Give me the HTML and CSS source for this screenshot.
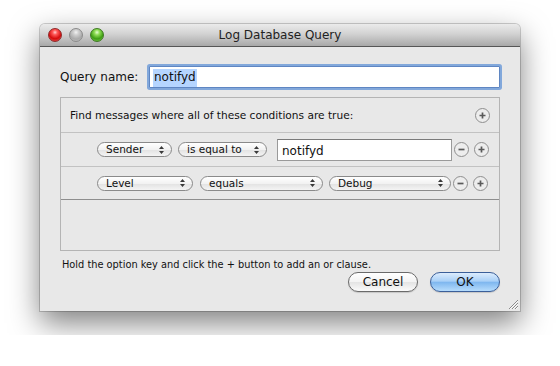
FILE: index.html
```html
<!DOCTYPE html>
<html lang="en">
<head>
  <meta charset="UTF-8">
  <title>Log Database Query</title>
  <link rel="stylesheet" href="styles.css">
</head>
<body>
  <div class="window">
    <!-- Title bar -->
    <div class="titlebar">
      <div class="lights">
        <span class="light red"></span>
        <span class="light gray"></span>
        <span class="light green"></span>
      </div>
      <div class="title">Log Database Query</div>
      <div></div>
    </div>

    <div class="content">
      <div class="query-row">
        <label class="query-label">Query name:</label>
        <div class="query-field"><span class="selected">notifyd</span></div>
      </div>

      <!-- Predicate editor -->
      <div class="predicates">
        <div class="pred-header">
          <span>Find messages where all of these conditions are true:</span>
          <svg class="round-btn" width="15" height="15" viewBox="0 0 15 15"><circle cx="7.5" cy="7.5" r="7" class="rb-circle"/><path d="M4.5 7.5h6M7.5 4.5v6" class="rb-glyph"/></svg>
        </div>

        <div class="pred-row">
          <div class="popup w-sender"><span>Sender</span><svg width="5" height="8" viewBox="0 0 5 8"><path d="M0 3L2.5 0L5 3ZM0 5L2.5 8L5 5Z" fill="#3a3a3a"/></svg></div>
          <div class="popup w-isequal gap-6"><span>is equal to</span><svg width="5" height="8" viewBox="0 0 5 8"><path d="M0 3L2.5 0L5 3ZM0 5L2.5 8L5 5Z" fill="#3a3a3a"/></svg></div>
          <div class="text-field gap-10">notifyd</div>
          <svg class="round-btn gap-2" width="15" height="15" viewBox="0 0 15 15"><circle cx="7.5" cy="7.5" r="7" class="rb-circle"/><path d="M4.5 7.5h6" class="rb-glyph"/></svg>
          <svg class="round-btn gap-5" width="15" height="15" viewBox="0 0 15 15"><circle cx="7.5" cy="7.5" r="7" class="rb-circle"/><path d="M4.5 7.5h6M7.5 4.5v6" class="rb-glyph"/></svg>
        </div>

        <div class="pred-row last">
          <div class="popup w-level"><span>Level</span><svg width="5" height="8" viewBox="0 0 5 8"><path d="M0 3L2.5 0L5 3ZM0 5L2.5 8L5 5Z" fill="#3a3a3a"/></svg></div>
          <div class="popup w-equals gap-7"><span>equals</span><svg width="5" height="8" viewBox="0 0 5 8"><path d="M0 3L2.5 0L5 3ZM0 5L2.5 8L5 5Z" fill="#3a3a3a"/></svg></div>
          <div class="popup w-debug gap-6"><span>Debug</span><svg width="5" height="8" viewBox="0 0 5 8"><path d="M0 3L2.5 0L5 3ZM0 5L2.5 8L5 5Z" fill="#3a3a3a"/></svg></div>
          <svg class="round-btn gap-2" width="15" height="15" viewBox="0 0 15 15"><circle cx="7.5" cy="7.5" r="7" class="rb-circle"/><path d="M4.5 7.5h6" class="rb-glyph"/></svg>
          <svg class="round-btn gap-5" width="15" height="15" viewBox="0 0 15 15"><circle cx="7.5" cy="7.5" r="7" class="rb-circle"/><path d="M4.5 7.5h6M7.5 4.5v6" class="rb-glyph"/></svg>
        </div>

        <div class="pred-empty"></div>
      </div>

      <div class="hint">Hold the option key and click the + button to add an or clause.</div>

      <div class="buttons">
        <button class="push-btn">Cancel</button>
        <button class="push-btn default">OK</button>
      </div>
    </div>

    <!-- Resize grip -->
    <svg class="grip" width="11" height="11" viewBox="0 0 11 11">
      <path d="M1 10L10 1M4 10L10 4M7 10L10 7" stroke="#8a8a8a" stroke-width="1"/>
      <path d="M2 10L10 2M5 10L10 5M8 10L10 8" stroke="#fafafa" stroke-width="1"/>
    </svg>
  </div>
</body>
</html>
```

FILE: styles.css
```css
body {
  margin: 0;
  padding: 24px 40px;
  background-color: #ffffff;
  font-family: 'DejaVu Sans', 'Liberation Sans', sans-serif;
  color: #111;
}

  .window {
    position: relative;
    width: 480px;
    height: 287px;
    box-sizing: border-box;
    background-color: #e8e8e8;
    border-radius: 5px 5px 0 0;
    box-shadow: 0 12px 30px rgba(0, 0, 0, 0.5), 0 0 0 1px rgba(0, 0, 0, 0.18);
  }

  .titlebar {
    display: grid;
    grid-template-columns: 1fr auto 1fr;
    align-items: center;
    height: 22px;
    border-bottom: 1px solid #565656;
    border-radius: 5px 5px 0 0;
    background: linear-gradient(#ebebeb, #d2d2d2 45%, #a8a8a8);
  }

  .lights {
    display: flex;
    gap: 7px;
    padding-left: 8px;
  }

  .light {
    width: 14px;
    height: 14px;
    box-sizing: border-box;
    border-radius: 50%;
  }

  .light.red {
    background: radial-gradient(circle at 50% 28%, #ffd0d0 0, #ff5a5a 22%, #d50c0c 60%, #e85a5a 100%);
    border: 1px solid #8e2a2a;
  }

  .light.gray {
    background: radial-gradient(circle at 50% 28%, #f2f2f2 0, #cfcfcf 25%, #a9a9a9 65%, #cdcdcd 100%);
    border: 1px solid #8a8a8a;
  }

  .light.green {
    background: radial-gradient(circle at 50% 28%, #e6ffd0 0, #8fdc55 25%, #3d9e12 62%, #8ad45e 100%);
    border: 1px solid #3e7a22;
  }

  .title {
    font-size: 12px;
    color: #222;
  }

  .content {
    padding: 19px 20px 0 20px;
  }

  .query-row {
    display: flex;
    align-items: center;
  }

  .query-label {
    width: 89px;
    font-size: 12px;
  }

  .query-field {
    flex: 1;
    height: 22px;
    box-sizing: border-box;
    padding: 3px 0 0 3px;
    background: #ffffff;
    border: 1px solid #5f86c2;
    box-shadow: 0 0 0 2px rgba(112, 156, 216, 0.85);
    border-radius: 1px;
    font-size: 12px;
  }

  .selected {
    background-color: #b5d5ff;
    padding: 1px 1px 3px 1px;
  }

  .predicates {
    margin-top: 9px;
    border: 1px solid #b4b4b4;
  }

  .pred-header {
    display: flex;
    justify-content: space-between;
    align-items: center;
    height: 34px;
    padding: 0 9px 0 9px;
    font-size: 10.6px;
    border-bottom: 1px solid #c2c2c2;
  }

  .pred-row {
    display: flex;
    align-items: center;
    height: 33px;
    padding-left: 36px;
    border-bottom: 1px solid #c2c2c2;
  }

  .pred-row.last {
    height: 32px;
    border-bottom: 1px solid #8e8e8e;
  }

  .pred-empty {
    height: 50px;
  }

  .popup {
    display: flex;
    justify-content: space-between;
    align-items: center;
    height: 15px;
    box-sizing: border-box;
    padding: 0 7px 0 8px;
    border: 1px solid #8a8a8a;
    border-radius: 8px;
    background: linear-gradient(#ffffff, #f2f2f2 50%, #e2e2e2 52%, #f4f4f4);
    font-size: 10.5px;
    line-height: 13px;
  }

  .w-sender { width: 75px; }
  .w-isequal { width: 89px; }
  .w-level { width: 96px; }
  .w-equals { width: 123px; }
  .w-debug { width: 122px; }

  .gap-2 { margin-left: 2px; }
  .gap-5 { margin-left: 5px; }
  .gap-6 { margin-left: 6px; }
  .gap-7 { margin-left: 7px; }
  .gap-10 { margin-left: 10px; }

  .text-field {
    width: 175px;
    height: 22px;
    box-sizing: border-box;
    padding: 4px 0 0 4px;
    background: #ffffff;
    border: 1px solid #9a9a9a;
    border-top-color: #7a7a7a;
    font-size: 12px;
  }

  .rb-circle {
    fill: #ededed;
    stroke: #8e8e8e;
    stroke-width: 1;
  }

  .rb-glyph {
    stroke: #5a5a5a;
    stroke-width: 1.7;
  }

  .round-btn {
    display: block;
    flex: none;
  }

  .hint {
    margin-top: 7px;
    padding-left: 2px;
    font-size: 9.8px;
    line-height: 13px;
  }

  .buttons {
    display: flex;
    justify-content: flex-end;
    gap: 12px;
    margin-top: 1px;
  }

  .push-btn {
    width: 70px;
    height: 20px;
    padding: 0;
    border: 1px solid #6a6a6a;
    border-radius: 10px;
    background: linear-gradient(#ffffff, #f3f3f3 50%, #e4e4e4 52%, #fbfbfb);
    font-family: 'DejaVu Sans', 'Liberation Sans', sans-serif;
    font-size: 12px;
    color: #111;
    box-shadow: 0 1px 1px rgba(0, 0, 0, 0.15);
  }

  .push-btn.default {
    border-color: #3b5f99;
    background: linear-gradient(#dcecfd, #a9d0f7 45%, #7fb7ef 52%, #b6dcfc);
  }

  .grip {
    position: absolute;
    right: 1px;
    bottom: 1px;
  }
```
